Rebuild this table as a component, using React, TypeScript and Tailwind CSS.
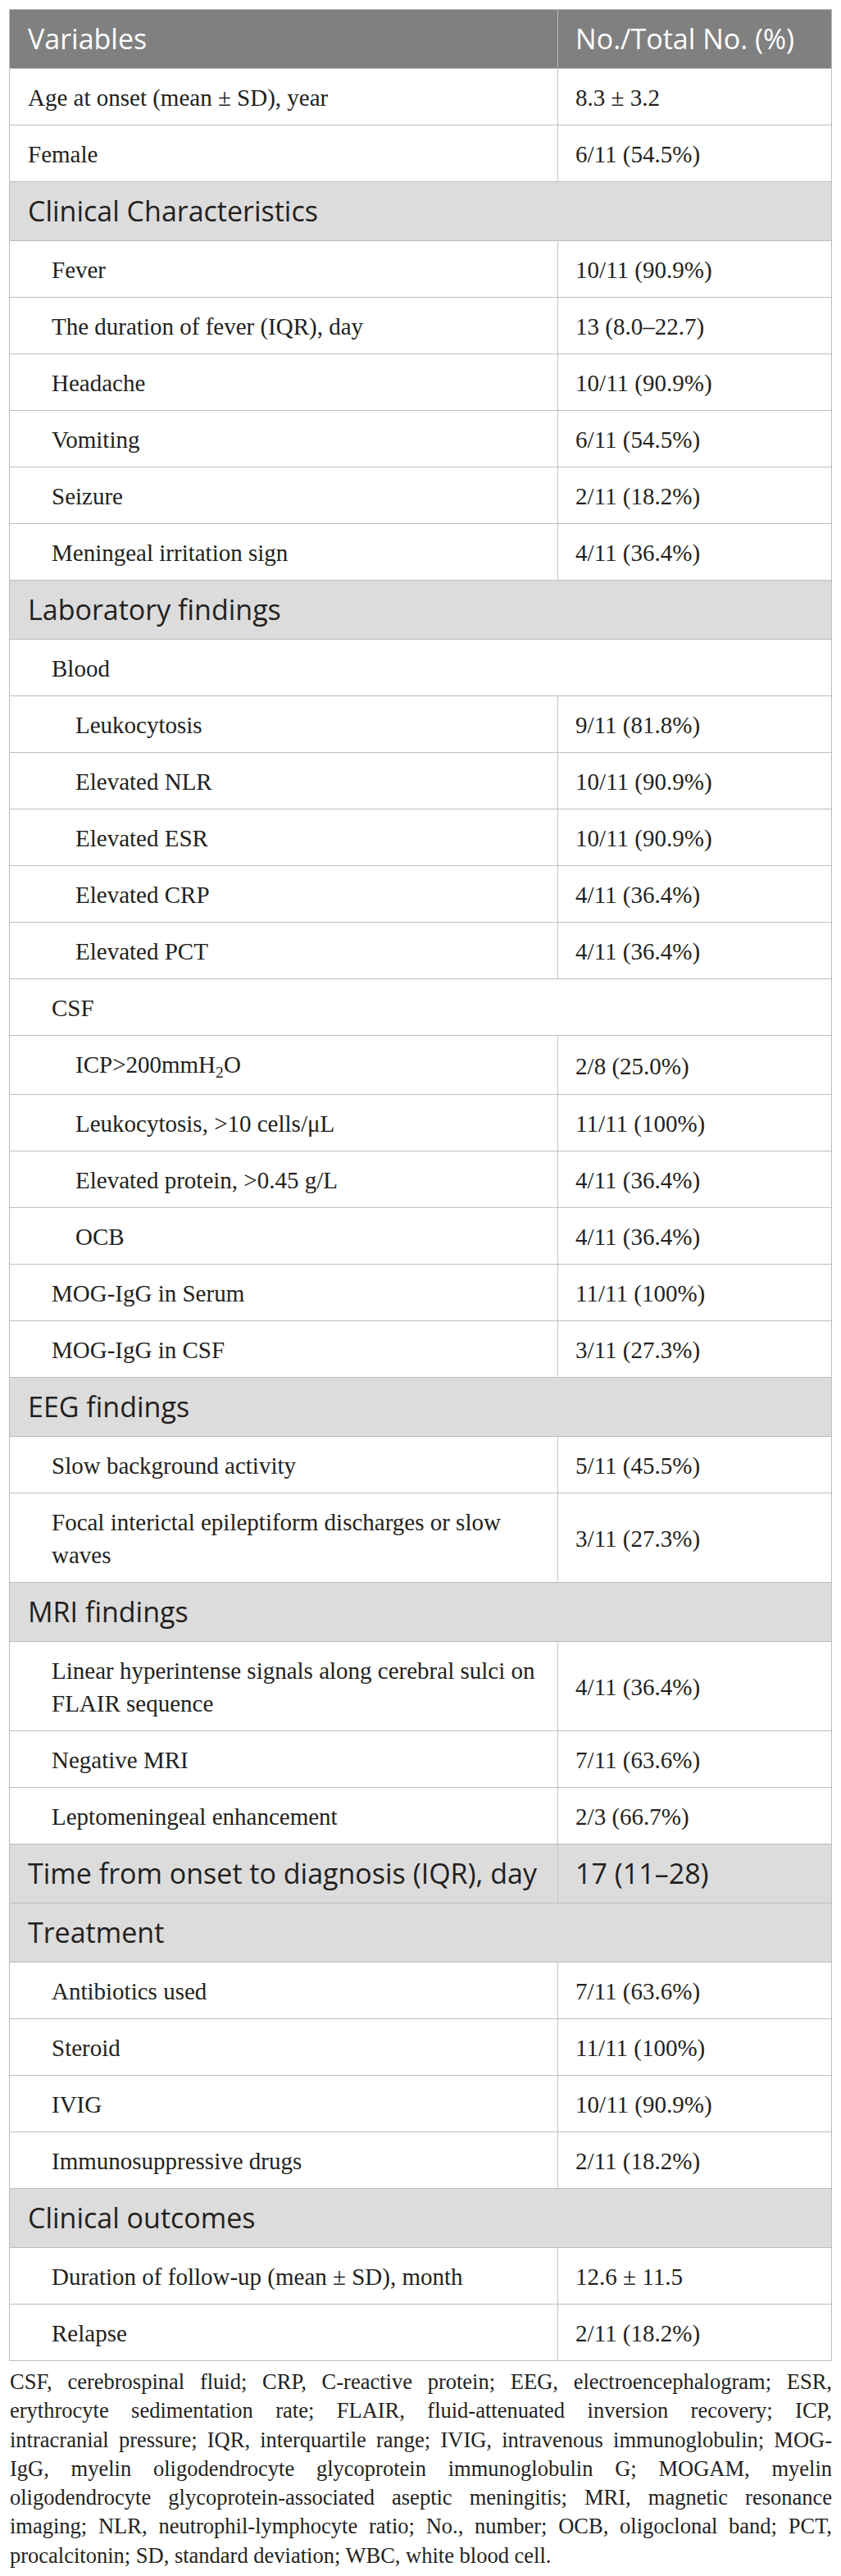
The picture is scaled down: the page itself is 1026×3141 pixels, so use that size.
import React from "react";

type Row =
  | { kind: "section"; label: string; value?: string }
  | { kind: "group"; label: string }
  | { kind: "item"; label: React.ReactNode; value: string; level: 0 | 1 | 2 };

const rows: Row[] = [
  { kind: "item", label: "Age at onset (mean ± SD), year", value: "8.3 ± 3.2", level: 0 },
  { kind: "item", label: "Female", value: "6/11 (54.5%)", level: 0 },
  { kind: "section", label: "Clinical Characteristics" },
  { kind: "item", label: "Fever", value: "10/11 (90.9%)", level: 1 },
  { kind: "item", label: "The duration of fever (IQR), day", value: "13 (8.0–22.7)", level: 1 },
  { kind: "item", label: "Headache", value: "10/11 (90.9%)", level: 1 },
  { kind: "item", label: "Vomiting", value: "6/11 (54.5%)", level: 1 },
  { kind: "item", label: "Seizure", value: "2/11 (18.2%)", level: 1 },
  { kind: "item", label: "Meningeal irritation sign", value: "4/11 (36.4%)", level: 1 },
  { kind: "section", label: "Laboratory findings" },
  { kind: "group", label: "Blood" },
  { kind: "item", label: "Leukocytosis", value: "9/11 (81.8%)", level: 2 },
  { kind: "item", label: "Elevated NLR", value: "10/11 (90.9%)", level: 2 },
  { kind: "item", label: "Elevated ESR", value: "10/11 (90.9%)", level: 2 },
  { kind: "item", label: "Elevated CRP", value: "4/11 (36.4%)", level: 2 },
  { kind: "item", label: "Elevated PCT", value: "4/11 (36.4%)", level: 2 },
  { kind: "group", label: "CSF" },
  {
    kind: "item",
    label: (
      <>
        ICP&gt;200mmH<span className="relative top-[0.28em] text-[0.68em]">2</span>O
      </>
    ),
    value: "2/8 (25.0%)",
    level: 2,
  },
  { kind: "item", label: "Leukocytosis, >10 cells/μL", value: "11/11 (100%)", level: 2 },
  { kind: "item", label: "Elevated protein, >0.45 g/L", value: "4/11 (36.4%)", level: 2 },
  { kind: "item", label: "OCB", value: "4/11 (36.4%)", level: 2 },
  { kind: "item", label: "MOG-IgG in Serum", value: "11/11 (100%)", level: 1 },
  { kind: "item", label: "MOG-IgG in CSF", value: "3/11 (27.3%)", level: 1 },
  { kind: "section", label: "EEG findings" },
  { kind: "item", label: "Slow background activity", value: "5/11 (45.5%)", level: 1 },
  {
    kind: "item",
    label: (
      <>
        Focal interictal epileptiform discharges or slow
        <br />
        waves
      </>
    ),
    value: "3/11 (27.3%)",
    level: 1,
  },
  { kind: "section", label: "MRI findings" },
  {
    kind: "item",
    label: (
      <>
        Linear hyperintense signals along cerebral sulci on
        <br />
        FLAIR sequence
      </>
    ),
    value: "4/11 (36.4%)",
    level: 1,
  },
  { kind: "item", label: "Negative MRI", value: "7/11 (63.6%)", level: 1 },
  { kind: "item", label: "Leptomeningeal enhancement", value: "2/3 (66.7%)", level: 1 },
  { kind: "section", label: "Time from onset to diagnosis (IQR), day", value: "17 (11–28)" },
  { kind: "section", label: "Treatment" },
  { kind: "item", label: "Antibiotics used", value: "7/11 (63.6%)", level: 1 },
  { kind: "item", label: "Steroid", value: "11/11 (100%)", level: 1 },
  { kind: "item", label: "IVIG", value: "10/11 (90.9%)", level: 1 },
  { kind: "item", label: "Immunosuppressive drugs", value: "2/11 (18.2%)", level: 1 },
  { kind: "section", label: "Clinical outcomes" },
  { kind: "item", label: "Duration of follow-up (mean ± SD), month", value: "12.6 ± 11.5", level: 1 },
  { kind: "item", label: "Relapse", value: "2/11 (18.2%)", level: 1 },
];

const footnote = [
  "CSF, cerebrospinal fluid; CRP, C-reactive protein; EEG, electroencephalogram; ESR,",
  "erythrocyte sedimentation rate; FLAIR, fluid-attenuated inversion recovery; ICP,",
  "intracranial pressure; IQR, interquartile range; IVIG, intravenous immunoglobulin; MOG-",
  "IgG, myelin oligodendrocyte glycoprotein immunoglobulin G; MOGAM, myelin",
  "oligodendrocyte glycoprotein-associated aseptic meningitis; MRI, magnetic resonance",
  "imaging; NLR, neutrophil-lymphocyte ratio; No., number; OCB, oligoclonal band; PCT,",
  "procalcitonin; SD, standard deviation; WBC, white blood cell.",
];

const serif = "font-['Liberation_Serif',serif] text-[29px] leading-[40px] pt-[15px] pb-[13px] text-[#231f20]";
const sans = "font-['Open_Sans',sans-serif] text-[34px] leading-[43px] py-[14px] text-[#231f20]";
const indent = ["pl-[22px]", "pl-[51px]", "pl-[80px]"];

export default function App() {
  return (
    <div className="bg-white px-[11px] pt-[11px] pb-[10px]">
      <table className="w-[1004px] border-collapse border border-[#bdbdbd]">
        <colgroup>
          <col className="w-[670px]" />
          <col className="w-[334px]" />
        </colgroup>
        <thead>
          <tr className="bg-[#808080]">
            <th className="border-r border-[#bdbdbd] pl-[22px] py-[14px] text-left font-normal font-['Open_Sans',sans-serif] text-[34px] leading-[43px] text-white">
              Variables
            </th>
            <th className="pl-[21px] py-[14px] text-left font-normal font-['Open_Sans',sans-serif] text-[34px] leading-[43px] text-white whitespace-nowrap">
              No./Total No. (%)
            </th>
          </tr>
        </thead>
        <tbody>
          {rows.map((r, i) => {
            if (r.kind === "section") {
              return (
                <tr key={i} className="bg-[#dcdcdc] border-t border-[#bdbdbd]">
                  {r.value ? (
                    <>
                      <td className={`${sans} pl-[22px] border-r border-[#c4c4c4]`}>{r.label}</td>
                      <td className={`${sans} pl-[21px]`}>{r.value}</td>
                    </>
                  ) : (
                    <td colSpan={2} className={`${sans} pl-[22px]`}>
                      {r.label}
                    </td>
                  )}
                </tr>
              );
            }
            if (r.kind === "group") {
              return (
                <tr key={i} className="border-t border-[#bdbdbd]">
                  <td colSpan={2} className={`${serif} pl-[51px]`}>
                    {r.label}
                  </td>
                </tr>
              );
            }
            return (
              <tr key={i} className="border-t border-[#bdbdbd]">
                <td className={`${serif} ${indent[r.level]} pr-[16px] border-r border-[#c4c4c4]`}>{r.label}</td>
                <td className={`${serif} pl-[21px]`}>{r.value}</td>
              </tr>
            );
          })}
        </tbody>
      </table>

      <div className="mt-[8px] w-[1004px] pl-[1px] font-['Liberation_Serif',serif] text-[26.5px] leading-[35.3px] text-[#231f20]">
        {footnote.map((line, i) => (
          <div
            key={i}
            className={i < footnote.length - 1 ? "text-justify [text-align-last:justify]" : "text-left"}
          >
            {line}
          </div>
        ))}
      </div>
    </div>
  );
}
